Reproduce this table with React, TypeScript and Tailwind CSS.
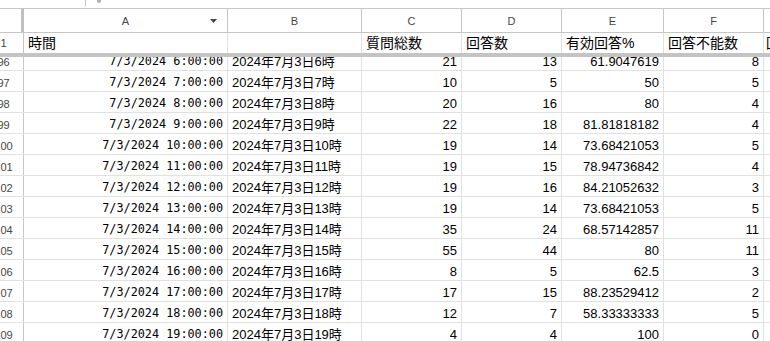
import React from 'react';

type Row = { n: number; h: number; total: number; ans: number; pct: string; ng: number };

const rows: Row[] = [
  { n: 96, h: 6, total: 21, ans: 13, pct: '61.9047619', ng: 8 },
  { n: 97, h: 7, total: 10, ans: 5, pct: '50', ng: 5 },
  { n: 98, h: 8, total: 20, ans: 16, pct: '80', ng: 4 },
  { n: 99, h: 9, total: 22, ans: 18, pct: '81.81818182', ng: 4 },
  { n: 100, h: 10, total: 19, ans: 14, pct: '73.68421053', ng: 5 },
  { n: 101, h: 11, total: 19, ans: 15, pct: '78.94736842', ng: 4 },
  { n: 102, h: 12, total: 19, ans: 16, pct: '84.21052632', ng: 3 },
  { n: 103, h: 13, total: 19, ans: 14, pct: '73.68421053', ng: 5 },
  { n: 104, h: 14, total: 35, ans: 24, pct: '68.57142857', ng: 11 },
  { n: 105, h: 15, total: 55, ans: 44, pct: '80', ng: 11 },
  { n: 106, h: 16, total: 8, ans: 5, pct: '62.5', ng: 3 },
  { n: 107, h: 17, total: 17, ans: 15, pct: '88.23529412', ng: 2 },
  { n: 108, h: 18, total: 12, ans: 7, pct: '58.33333333', ng: 5 },
  { n: 109, h: 19, total: 4, ans: 4, pct: '100', ng: 0 },
];

const font = { fontFamily: '"Liberation Sans", "Noto Sans CJK JP", sans-serif' };

const App: React.FC = () => {
  return (
    <div className="w-[770px] h-[341px] overflow-hidden bg-white text-black" style={font}>
      {/* toolbar remnant */}
      <div className="h-[9px] border-b border-[#c4c7c5] flex items-start">
        <div className="ml-[85px] w-px h-[6px] bg-[#c4c7c5]" />
        <div className="ml-[11px] w-[4px] h-[3px] rounded-b-full bg-[#b0b0b0]" />
      </div>

      {/* column letters */}
      <div className="flex h-[24px] border-b border-[#c4c7c5] text-[11px] text-[#444746]">
        <div className="-ml-[16px] w-[40px] shrink-0 border-r-[3px] border-[#c0c0c0]" />
        <div className="w-[204px] shrink-0 border-r border-[#c4c7c5] flex items-center justify-center pt-px relative">
          A
          <svg className="absolute right-[10px] top-[10px]" width="7" height="4" viewBox="0 0 7 4">
            <path d="M0 0h7L3.5 4z" fill="#444746" />
          </svg>
        </div>
        <div className="w-[134px] shrink-0 border-r border-[#c4c7c5] flex items-center justify-center pt-px">B</div>
        <div className="w-[100px] shrink-0 border-r border-[#c4c7c5] flex items-center justify-center pt-px">C</div>
        <div className="w-[100px] shrink-0 border-r border-[#c4c7c5] flex items-center justify-center pt-px">D</div>
        <div className="w-[102px] shrink-0 border-r border-[#c4c7c5] flex items-center justify-center pt-px">E</div>
        <div className="w-[100px] shrink-0 border-r border-[#c4c7c5] flex items-center justify-center pt-px">F</div>
        <div className="w-[80px] shrink-0" />
      </div>

      {/* frozen row 1 */}
      <div className="flex h-[20px] text-[14px]">
        <div className="-ml-[16px] w-[40px] shrink-0 border-r border-[#c4c7c5] flex items-center justify-center pt-px text-[11px] text-[#444746]">1</div>
        <div className="w-[204px] shrink-0 border-r border-[#e1e1e1] flex items-center px-[4px] pt-px">時間</div>
        <div className="w-[134px] shrink-0 border-r border-[#e1e1e1]" />
        <div className="w-[100px] shrink-0 border-r border-[#e1e1e1] flex items-center px-[4px] pt-px">質問総数</div>
        <div className="w-[100px] shrink-0 border-r border-[#e1e1e1] flex items-center px-[4px] pt-px">回答数</div>
        <div className="w-[102px] shrink-0 border-r border-[#e1e1e1] flex items-center px-[4px] pt-px">有効回答%</div>
        <div className="w-[100px] shrink-0 border-r border-[#e1e1e1] flex items-center px-[4px] pt-px">回答不能数</div>
        <div className="w-[80px] shrink-0 flex items-center px-[2px] pt-px whitespace-nowrap">回答率</div>
      </div>
      <div className="h-[4px] bg-[#c4c4c4]" />

      {/* scrolled data */}
      <div className="h-[285px] overflow-hidden">
        <div className="-mt-[7px]">
          {rows.map((r) => (
            <div key={r.n} className="flex h-[21px] border-b border-[#e1e1e1] text-[13px]">
              <div className="-ml-[16px] w-[40px] shrink-0 border-r border-[#c4c7c5] flex items-center justify-center pt-[4px] text-[11px] text-[#444746]">
                {r.n}
              </div>
              <div
                className="w-[204px] shrink-0 border-r border-[#e1e1e1] flex items-center justify-end px-[4px] pt-[4px] text-[11.8px] whitespace-pre"
                style={{ fontFamily: '"DejaVu Sans Mono", monospace' }}
              >
                {`7/3/2024 ${r.h}:00:00`}
              </div>
              <div className="w-[134px] shrink-0 border-r border-[#e1e1e1] flex items-center px-[4px] pt-[4px] whitespace-nowrap">
                2024年7月3日{r.h}時
              </div>
              <div className="w-[100px] shrink-0 border-r border-[#e1e1e1] flex items-center justify-end px-[4px] pt-[4px]">{r.total}</div>
              <div className="w-[100px] shrink-0 border-r border-[#e1e1e1] flex items-center justify-end px-[4px] pt-[4px]">{r.ans}</div>
              <div className="w-[102px] shrink-0 border-r border-[#e1e1e1] flex items-center justify-end px-[4px] pt-[4px]">{r.pct}</div>
              <div className="w-[100px] shrink-0 border-r border-[#e1e1e1] flex items-center justify-end px-[4px] pt-[4px]">{r.ng}</div>
              <div className="w-[80px] shrink-0" />
            </div>
          ))}
        </div>
      </div>
    </div>
  );
};

export default App;
